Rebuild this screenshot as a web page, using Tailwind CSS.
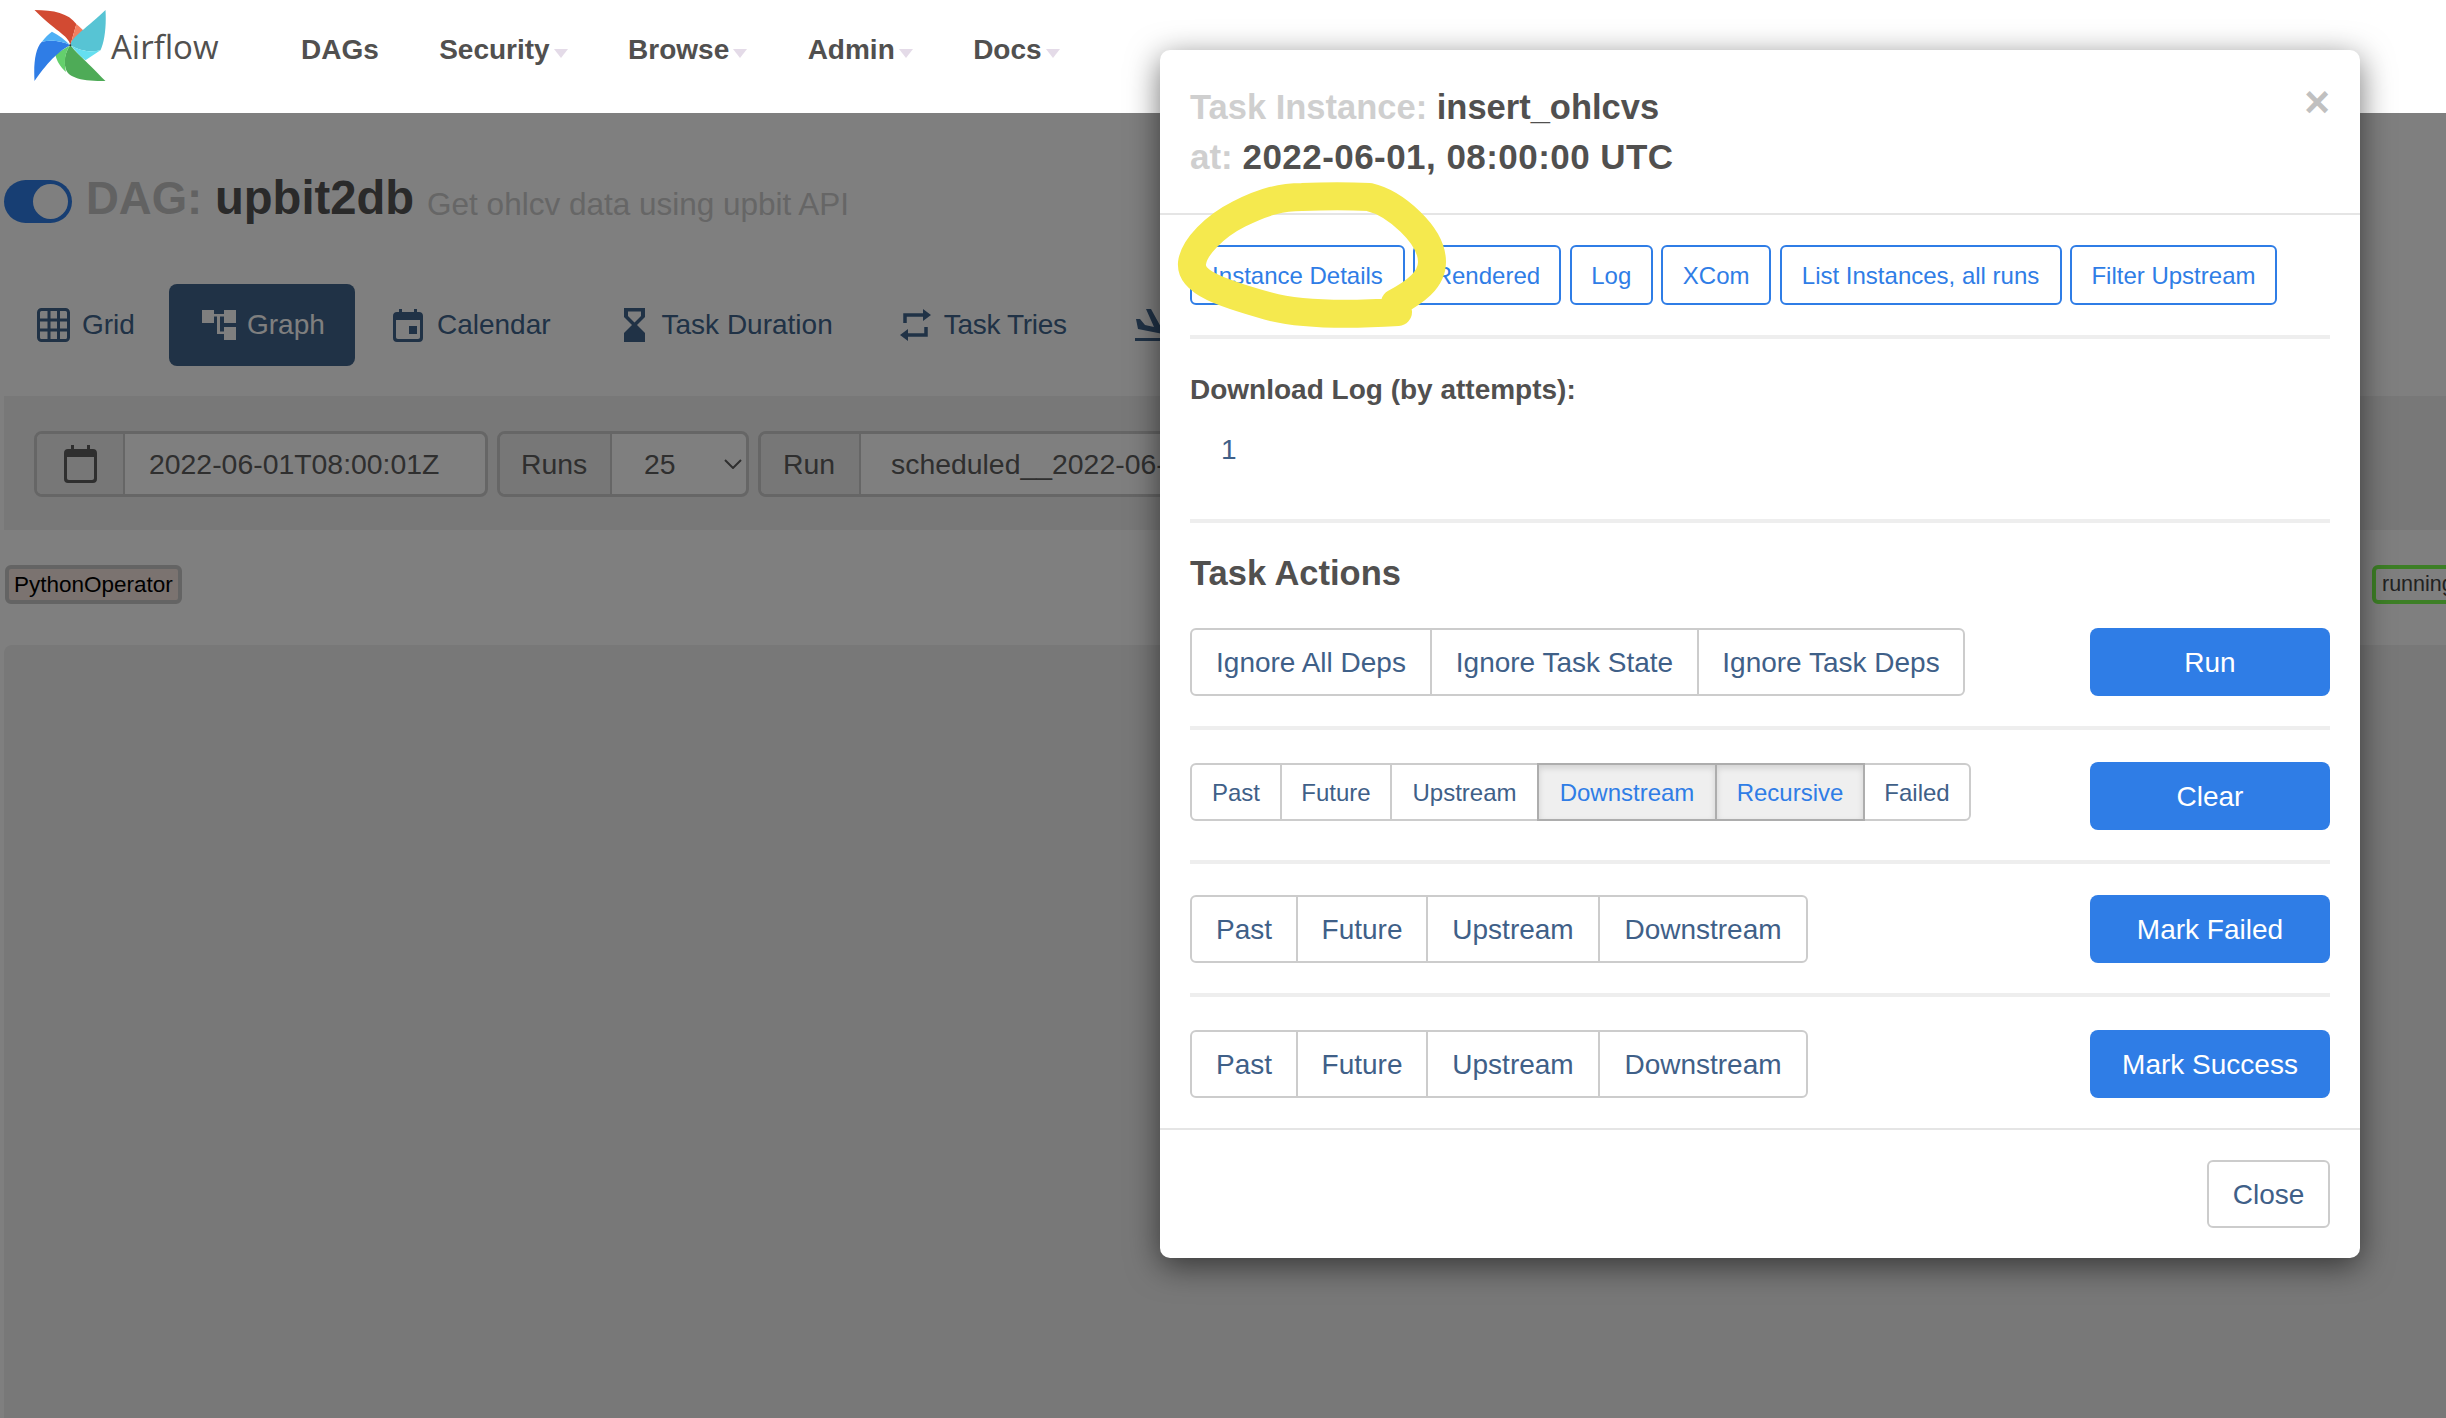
<!DOCTYPE html>
<html lang="en">
<head>
  <meta charset="UTF-8">
  <title>Airflow - upbit2db</title>
  <script src="https://cdn.jsdelivr.net/npm/@tailwindcss/browser@4"></script>
</head>
<body class="bg-white font-['Liberation_Sans',Arial,sans-serif]">
<div class="relative w-[2446px] h-[1418px] overflow-hidden">

  <!-- Top nav -->
  <nav class="relative z-20 h-[113px] bg-white pl-[34px]">
    <div class="flex items-center h-[100px] text-[28px] font-bold text-[#51504f]">
      <div class="flex items-center w-[267px] h-[91px]">
        <svg class="w-[72px] h-[71px] shrink-0 -mt-[9px]" viewBox="103 30 212 212">
          <path fill="#d24a32" d="M103 30C160 30 205 40 228 72L210 135C205 105 160 90 103 30Z"/>
          <path fill="#f47e5f" d="M228 72C240 82 250 92 258 100L210 135Z"/>
          <path fill="#57c4d4" d="M315 30C318 80 312 125 300 150C270 158 235 150 210 135C215 110 240 100 315 30Z"/>
          <path fill="#65dff0" d="M210 135C235 150 270 158 300 150L255 180C240 170 225 150 210 135Z"/>
          <path fill="#4eab57" d="M315 242C250 242 200 235 195 200C190 180 195 155 210 135C235 165 260 185 315 242Z"/>
          <path fill="#64cf6c" d="M210 135C195 155 190 180 197 215C180 200 168 180 165 162Z"/>
          <path fill="#2f7de6" d="M103 242C100 190 105 145 125 125C155 118 190 125 210 135C180 150 150 175 103 242Z"/>
          <path fill="#4fb0f5" d="M125 125C135 112 145 102 155 95C175 105 195 120 210 135C190 125 155 118 125 125Z"/>
          <circle cx="210" cy="135" r="3" fill="#333"/>
        </svg>
        <span class="ml-[5px] -mt-[7px] text-[33px] font-normal font-['Open_Sans',sans-serif] text-[#51504f]">Airflow</span>
      </div>
      <div class="flex items-center gap-[60.4px]">
        <a>DAGs</a>
        <a class="flex items-center gap-[4px]">Security<i class="mt-[6px] border-x-[7px] border-x-transparent border-t-[9px] border-t-[#e4dbe8]"></i></a>
        <a class="flex items-center gap-[4px]">Browse<i class="mt-[6px] border-x-[7px] border-x-transparent border-t-[9px] border-t-[#e4dbe8]"></i></a>
        <a class="flex items-center gap-[4px]">Admin<i class="mt-[6px] border-x-[7px] border-x-transparent border-t-[9px] border-t-[#e4dbe8]"></i></a>
        <a class="flex items-center gap-[4px]">Docs<i class="mt-[6px] border-x-[7px] border-x-transparent border-t-[9px] border-t-[#e4dbe8]"></i></a>
      </div>
    </div>
  </nav>

  <!-- Page under the overlay -->
  <main>
    <div class="flex items-center h-[43px] mt-[67px] pl-[4px]">
      <div class="flex justify-end items-center w-[68px] h-[43px] rounded-full bg-[#2f7de6] pr-[4px]">
        <div class="w-[35px] h-[35px] rounded-full bg-white"></div>
      </div>
      <h2 class="ml-[14px] -mt-[6px] text-[45.5px] font-bold text-[#c4c4c4]">DAG: <span class="text-[47.2px] text-[#545454]">upbit2db</span></h2>
      <span class="ml-[13px] mt-[6px] text-[31.5px] text-[#cccccc]">Get ohlcv data using upbit API</span>
    </div>

    <div class="flex items-center h-[82px] mt-[61px] text-[28px] text-[#40648c]">
      <a class="flex items-center gap-[12px] ml-[37px]">
        <svg class="w-[33px] h-[34px]" viewBox="0 0 33 34" fill="none" stroke="currentColor" stroke-width="3"><rect x="1.5" y="1.5" width="30" height="31" rx="3"/><path d="M12 2V32M21.5 2V32M2 12H31M2 22H31"/></svg>
        Grid
      </a>
      <a class="flex items-center justify-center gap-[11px] w-[186px] h-[82px] ml-[34px] pl-[3px] rounded-lg bg-[#40648c] text-white">
        <svg class="w-[34px] h-[30px]" viewBox="0 0 34 30" fill="currentColor"><path d="M0 0H12V13H0ZM22 0H34V13H22ZM22 17H34V30H22ZM12 4H22V6.5H12ZM15 4H18V24H15ZM15 21.5H22V24H15Z"/></svg>
        Graph
      </a>
      <a class="flex items-center gap-[14px] ml-[38px]">
        <svg class="w-[30px] h-[33px]" viewBox="0 0 30 33" fill="currentColor"><path fill-rule="evenodd" d="M6 0H9V3H21V0H24V3H26C28.5 3 30 4.5 30 7V29C30 31.500 28.500 33 26 33H4C1.500 33 0 31.500 0 29V7C0 4.500 1.500 3 4 3H6ZM3 11V28C3 29.300 3.700 30 5 30H25C26.300 30 27 29.300 27 28V11ZM16 17H24V25H16Z"/></svg>
        Calendar
      </a>
      <a class="flex items-center gap-[17px] ml-[73px]">
        <svg class="w-[21px] h-[34px]" viewBox="0 0 21 34" fill="currentColor"><path fill-rule="evenodd" d="M0 0H21V9L13 17L21 25V34H0V25L8 17L0 9ZM4 3.500V8L10.500 14.500L17 8V3.500Z"/></svg>
        Task Duration
      </a>
      <a class="flex items-center gap-[13px] ml-[67px]">
        <svg class="w-[31px] h-[32px]" viewBox="0 0 31 32" fill="none" stroke="currentColor" stroke-width="3.500"><path d="M5 14V6H24M26 18V26H7"/><path fill="currentColor" stroke="none" d="M23 0L31 6L23 12ZM8 20L0 26L8 32Z"/></svg>
        <span class="tracking-[-0.3px]">Task Tries</span>
      </a>
      <svg class="w-[40px] h-[32px] ml-[68px]" viewBox="0 0 40 32" fill="currentColor"><path d="M1 10L5 10L10 16L19 18L11 0L16 0L27 20L38 23L38 27L3 20ZM0 29H40V32H0Z"/></svg>
    </div>

    <div class="flex gap-[9px] h-[134px] mt-[30px] ml-[4px] pt-[35px] pl-[30px] bg-[#f0f0f0] text-[28.4px] text-[#5e5e5e]">
      <div class="flex w-[454px] h-[66px] rounded-lg border-[3px] border-[#cccccc] bg-white overflow-hidden">
        <div class="flex items-center justify-center w-[88px] bg-[#eeeeee] border-r-2 border-[#cccccc]">
          <svg class="w-[33px] h-[38px]" viewBox="0 0 33 38" fill="currentColor"><path fill-rule="evenodd" d="M7 0H10V4H23V0H26V4H29C31.500 4 33 5.500 33 8V34C33 36.500 31.500 38 29 38H4C1.500 38 0 36.500 0 34V8C0 5.500 1.500 4 4 4H7ZM3 12V33C3 34.300 3.700 35 5 35H28C29.300 35 30 34.300 30 33V12Z"/></svg>
        </div>
        <div class="flex items-center pl-[24px]">2022-06-01T08:00:01Z</div>
      </div>
      <div class="flex w-[252px] h-[66px] rounded-lg border-[3px] border-[#cccccc] bg-white overflow-hidden">
        <div class="flex items-center pl-[21px] w-[112px] bg-[#eeeeee] border-r-2 border-[#cccccc]">Runs</div>
        <div class="flex flex-1 items-center justify-between pl-[32px] pr-[4px]">
          25
          <svg class="w-[18px] h-[10px]" viewBox="0 0 18 10" fill="none" stroke="currentColor" stroke-width="2"><path d="M1 1L9 9L17 1"/></svg>
        </div>
      </div>
      <div class="flex w-[450px] h-[66px] rounded-lg border-[3px] border-[#cccccc] bg-white overflow-hidden">
        <div class="flex items-center pl-[22px] w-[100px] bg-[#eeeeee] border-r-2 border-[#cccccc]">Run</div>
        <div class="flex items-center pl-[30px] whitespace-nowrap">scheduled__2022-06-</div>
      </div>
    </div>

    <div class="flex justify-between h-[115px] pt-[35px] pl-[5px] text-[22.5px]">
      <span class="flex items-center px-[5px] h-[39px] rounded-md border-4 border-[#c8c8c8] bg-[#f6e6e0] text-black">PythonOperator</span>
      <span class="flex items-center px-[6px] w-[100px] h-[39px] -mr-[26px] rounded-md border-4 border-[#7aff4c] text-[21.5px] text-[#444444]">running</span>
    </div>

    <div class="ml-[4px] h-[773px] rounded-tl-lg bg-[#f0f0f0]"></div>
  </main>

  <div class="absolute inset-0 z-10 bg-black/50"></div>

  <!-- Task instance modal -->
  <section class="absolute z-30 left-[1160px] top-[50px] w-[1200px] h-[1208px] rounded-[10px] bg-white shadow-[0_8px_32px_rgba(0,0,0,0.55)]">
    <header class="relative h-[165px] pt-[32px] pl-[30px] border-b-2 border-[#e5e5e5] leading-[50px] font-bold text-[#cfcfcf]">
      <div class="text-[34.5px]">Task Instance: <span class="text-[#51504f]">insert_ohlcvs</span></div>
      <div class="text-[35px]">at: <span class="tracking-[0.45px] text-[#51504f]">2022-06-01, 08:00:00 UTC</span></div>
      <button class="absolute right-[30px] top-[32px] text-[44px] leading-[40px] text-[#c0c0c0]">×</button>
    </header>

    <div class="px-[30px]">
      <div class="flex gap-[8.4px] mt-[30px] text-[24px] text-[#2f7de6]">
        <a class="flex items-center justify-center w-[215px] h-[60px] pt-[2px] rounded-md border-2 border-[#2f7de6]">Instance Details</a>
        <a class="flex items-center justify-center w-[148px] h-[60px] pt-[2px] rounded-md border-2 border-[#2f7de6]">Rendered</a>
        <a class="flex items-center justify-center w-[83px] h-[60px] pt-[2px] rounded-md border-2 border-[#2f7de6]">Log</a>
        <a class="flex items-center justify-center w-[110px] h-[60px] pt-[2px] rounded-md border-2 border-[#2f7de6]">XCom</a>
        <a class="flex items-center justify-center w-[282px] h-[60px] pt-[2px] rounded-md border-2 border-[#2f7de6]">List Instances, all runs</a>
        <a class="flex items-center justify-center w-[207px] h-[60px] pt-[2px] rounded-md border-2 border-[#2f7de6]">Filter Upstream</a>
      </div>
      <hr class="mt-[30px] h-[4px] border-0 bg-[#eeeeee]">

      <div class="mt-[31px] text-[28px] leading-[40px] font-bold text-[#51504f]">Download Log (by attempts):</div>
      <div class="mt-[20px] pl-[31px] text-[28px] leading-[40px] text-[#3f6088]">1</div>
      <hr class="mt-[49px] h-[4px] border-0 bg-[#eeeeee]">

      <h4 class="mt-[25px] text-[34.5px] leading-[50px] font-bold text-[#51504f]">Task Actions</h4>

      <div class="flex justify-between items-start mt-[30px] text-[#3f6088]">
        <div class="flex h-[68px] rounded-md border-2 border-[#cccccc] text-[28px]">
          <a class="flex items-center justify-center w-[238px] pt-[2px]">Ignore All Deps</a>
          <a class="flex items-center justify-center w-[267px] pt-[2px] border-l-2 border-[#cccccc]">Ignore Task State</a>
          <a class="flex items-center justify-center w-[266px] pt-[2px] border-l-2 border-[#cccccc]">Ignore Task Deps</a>
        </div>
        <button class="w-[240px] h-[68px] pt-[2px] rounded-lg bg-[#2f7de6] text-[28px] text-white">Run</button>
      </div>
      <hr class="mt-[30px] h-[4px] border-0 bg-[#eeeeee]">

      <div class="flex justify-between items-start mt-[32px] text-[#3f6088]">
        <div class="flex h-[58px] mt-px rounded-md border-2 border-[#cccccc] text-[24px]">
          <a class="flex items-center justify-center w-[88px] pt-[2px]">Past</a>
          <a class="flex items-center justify-center w-[110px] pt-[2px] border-l-2 border-[#cccccc]">Future</a>
          <a class="flex items-center justify-center w-[147px] pt-[2px] border-l-2 border-[#cccccc]">Upstream</a>
          <a class="flex items-center justify-center w-[180px] -my-[2px] pt-[2px] border-2 border-[#adadad] bg-[#efefef] text-[#2f7de6] shadow-[inset_0_3px_6px_rgba(0,0,0,0.125)]">Downstream</a>
          <a class="flex items-center justify-center w-[148px] -my-[2px] pt-[2px] border-2 border-l-0 border-[#adadad] bg-[#efefef] text-[#2f7de6] shadow-[inset_0_3px_6px_rgba(0,0,0,0.125)]">Recursive</a>
          <a class="flex items-center justify-center w-[104px] pt-[2px]">Failed</a>
        </div>
        <button class="w-[240px] h-[68px] pt-[2px] rounded-lg bg-[#2f7de6] text-[28px] text-white">Clear</button>
      </div>
      <hr class="mt-[30px] h-[4px] border-0 bg-[#eeeeee]">

      <div class="flex justify-between items-start mt-[31px] text-[#3f6088]">
        <div class="flex h-[68px] rounded-md border-2 border-[#cccccc] text-[28px]">
          <a class="flex items-center justify-center w-[104px] pt-[2px]">Past</a>
          <a class="flex items-center justify-center w-[130px] pt-[2px] border-l-2 border-[#cccccc]">Future</a>
          <a class="flex items-center justify-center w-[172px] pt-[2px] border-l-2 border-[#cccccc]">Upstream</a>
          <a class="flex items-center justify-center w-[208px] pt-[2px] border-l-2 border-[#cccccc]">Downstream</a>
        </div>
        <button class="w-[240px] h-[68px] pt-[2px] rounded-lg bg-[#2f7de6] text-[28px] text-white">Mark Failed</button>
      </div>
      <hr class="mt-[30px] h-[4px] border-0 bg-[#eeeeee]">

      <div class="flex justify-between items-start mt-[33px] text-[#3f6088]">
        <div class="flex h-[68px] rounded-md border-2 border-[#cccccc] text-[28px]">
          <a class="flex items-center justify-center w-[104px] pt-[2px]">Past</a>
          <a class="flex items-center justify-center w-[130px] pt-[2px] border-l-2 border-[#cccccc]">Future</a>
          <a class="flex items-center justify-center w-[172px] pt-[2px] border-l-2 border-[#cccccc]">Upstream</a>
          <a class="flex items-center justify-center w-[208px] pt-[2px] border-l-2 border-[#cccccc]">Downstream</a>
        </div>
        <button class="w-[240px] h-[68px] pt-[2px] rounded-lg bg-[#2f7de6] text-[28px] text-white">Mark Success</button>
      </div>
    </div>

    <footer class="flex justify-end mt-[30px] pt-[30px] pr-[30px] border-t-2 border-[#e5e5e5]">
      <button class="w-[123px] h-[68px] pt-[2px] rounded-md border-2 border-[#cccccc] text-[28px] text-[#3f6088]">Close</button>
    </footer>
  </section>

  <!-- Yellow marker circle drawn over the screenshot -->
  <svg class="absolute z-40 left-0 top-0 w-[2446px] h-[1418px] pointer-events-none" viewBox="0 0 2446 1418" fill="none">
    <path stroke="#f5e94e" stroke-width="28" stroke-linecap="round" stroke-linejoin="round" d="M1398 312C1350 315 1300 315 1268 306C1225 294 1190 283 1192 263C1194 247 1215 226 1239 214C1265 201 1282 197 1302 197C1325 196 1350 196 1369 197C1395 203 1432 235 1432 262C1432 280 1415 292 1395 303"/>
  </svg>
</div>
</body>
</html>
